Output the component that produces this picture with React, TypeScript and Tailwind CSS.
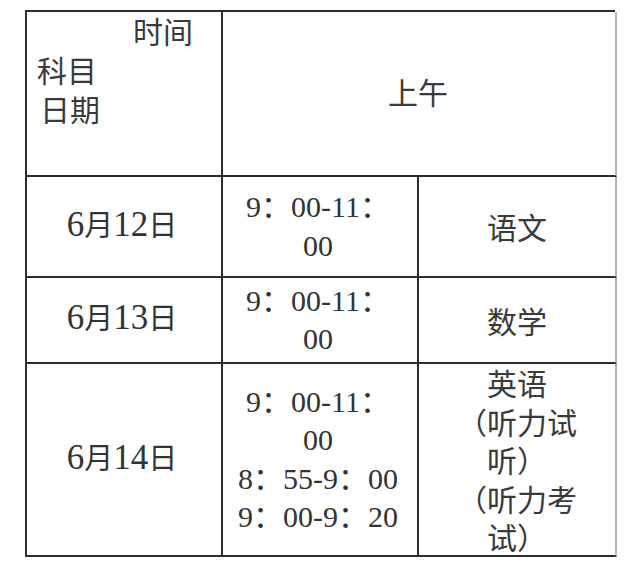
const rows = [
  { date: "6月12日", times: ["9：00-11：", "00"], subject: ["语文"], h: "h-[101px]" },
  { date: "6月13日", times: ["9：00-11：", "00"], subject: ["数学"], h: "h-[86px]" },
  {
    date: "6月14日",
    times: ["9：00-11：", "00", "8：55-9：00", "9：00-9：20"],
    subject: ["英语", "（听力试", "听）", "（听力考", "试）"],
    h: "h-[193px]",
  },
];

const serif = "font-['Liberation_Serif','Noto_Sans_CJK_SC',serif]";
const sans = "font-['Noto_Sans_CJK_SC',sans-serif]";
const cell = "border-r-2 border-b-2 border-[#2d2d2d] flex flex-col items-center justify-center text-center";

// digits a bit larger than the CJK characters, like in the scan
const DateText = ({ text }: { text: string }) => (
  <span className="pr-[4px] whitespace-nowrap">
    {text.split(/(\d+)/).filter(Boolean).map((part, i) =>
      /\d/.test(part) ? (
        <span key={i} className="text-[35px]">{part}</span>
      ) : (
        <span key={i} className={`text-[29px] ${sans}`}>{part}</span>
      )
    )}
  </span>
);

export default function App() {
  return (
    <div className="min-h-[566px] bg-white pt-[10px] pl-[25px] text-[#333]">
      <div className="w-[590px] grid grid-cols-[196px_196px_198px] border-t-2 border-l-2 border-[#2d2d2d]">
        {/* header */}
        <div className={`h-[165px] border-r-2 border-b-2 border-[#2d2d2d] text-[30px] leading-[39px] text-[#3a3a3a] ${sans}`}>
          <div className="pl-[106px] -mt-[1px]">时间</div>
          <div className="pl-[10px]">科目</div>
          <div className="pl-[13px]">日期</div>
        </div>
        <div className={`col-span-2 h-[165px] border-r-2 border-b-2 border-[#2d2d2d] border-r-[#b5b5b5] flex items-center justify-center text-[30px] text-[#3a3a3a] ${sans}`}>
          <span className="pr-[2px] -mt-[4px]">上午</span>
        </div>

        {rows.map((r) => (
          <div key={r.date} className="contents">
            <div className={`${cell} ${r.h} leading-[40px] ${serif}`}>
              <DateText text={r.date} />
            </div>
            <div className={`${cell} ${r.h} text-[30px] leading-[38.5px] ${serif}`}>
              {r.times.map((t, i) => (
                <div key={i} className="whitespace-nowrap pr-[4px]">{t}</div>
              ))}
            </div>
            <div className={`${cell} ${r.h} border-r-[#b5b5b5] text-[30px] leading-[38.5px] text-[#3a3a3a] ${sans}`}>
              {r.subject.map((s, i) => (
                <div key={i} className="whitespace-nowrap">{s}</div>
              ))}
            </div>
          </div>
        ))}
      </div>
    </div>
  );
}
